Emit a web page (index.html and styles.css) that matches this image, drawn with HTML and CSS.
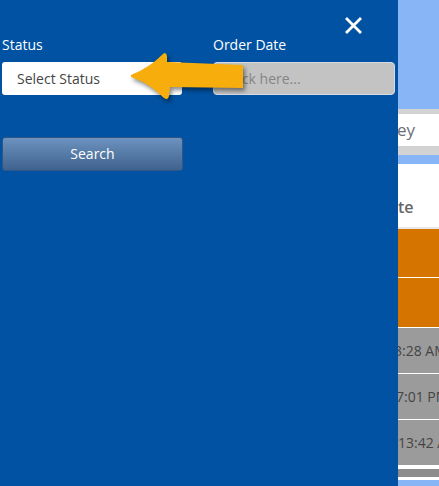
FILE: index.html
```html
<!DOCTYPE html>
<html>
<head>
<meta charset="utf-8">
<link rel="stylesheet" href="styles.css">
</head>
<body>
<div class="page">
  <aside class="panel">
    <div class="panel-head">
      <button class="close" aria-label="Close">
        <svg width="17" height="17" viewBox="0 0 17 17"><path d="M2 2L15 15M15 2L2 15" stroke="#fff" stroke-width="2.8" stroke-linecap="square"/></svg>
      </button>
    </div>
    <div class="filters">
      <div class="field">
        <label class="label">Status</label>
        <div class="select">Select Status</div>
      </div>
      <div class="field field-date">
        <label class="label">Order Date</label>
        <div class="input">Click here...</div>
      </div>
    </div>
    <button class="search">Search</button>
    <svg class="pointer" width="130" height="64" viewBox="0 0 130 64">
      <path d="M6 27 Q24 20 38 6 Q41 3 42 8 L42 14 L118 17 L118 40 L45 39 L44 48 Q43 53 39 50 Q24 35 6 29 Z" fill="#F7AD0B"/>
    </svg>
  </aside>
  <div class="behind">
    <div class="b-top"></div>
    <div class="b-gray"></div>
    <div class="b-search">ey</div>
    <div class="b-gray b-gray2"></div>
    <div class="b-blue"></div>
    <div class="b-head">te</div>
    <div class="b-line"></div>
    <div class="b-row b-orange"></div>
    <div class="b-sep"></div>
    <div class="b-row b-orange"></div>
    <div class="b-sep"></div>
    <div class="b-row b-grey"><span class="cut3">3:28 AM</span></div>
    <div class="b-sep"></div>
    <div class="b-row b-grey"><span class="cut1">7:01 PM</span></div>
    <div class="b-sep"></div>
    <div class="b-row b-grey"><span>13:42 AM</span></div>
    <div class="b-white4"></div>
    <div class="b-foot"></div>
    <div class="b-white3"></div>
    <div class="b-bottom"></div>
  </div>
</div>
</body>
</html>
```

FILE: styles.css
```css
* { box-sizing: border-box; }
html, body { margin: 0; padding: 0; }
body {
  width: 439px;
  height: 486px;
  overflow: hidden;
  font-family: "Open Sans", "Liberation Sans", sans-serif;
  font-size: 14px;
}
.page {
  display: flex;
  width: 439px;
  height: 486px;
}
.panel {
  position: relative;
  width: 398px;
  flex: 0 0 398px;
  height: 486px;
  background: #0152A2;
  padding: 0 3px 0 2px;
}
.panel-head {
  height: 35px;
  display: flex;
  justify-content: flex-end;
  align-items: flex-start;
  padding-top: 17px;
  padding-right: 33px;
}
.close {
  border: 0;
  background: none;
  padding: 0;
  width: 17px;
  height: 17px;
  display: block;
}
.close svg { display: block; }
.filters {
  display: grid;
  grid-template-columns: 180px 182px;
  column-gap: 31px;
}
.label {
  display: block;
  color: #fff;
  line-height: 20px;
  height: 20px;
  margin-bottom: 7px;
}
.select {
  height: 33px;
  background: #fff;
  border-radius: 3px;
  color: #444;
  line-height: 33px;
  padding-left: 15px;
}
.input {
  height: 33px;
  background: #C3C3C3;
  border: 1px solid #D6DCE4;
  border-radius: 4px;
  color: #858585;
  line-height: 31px;
  padding-left: 12px;
}
.search {
  display: block;
  margin-top: 42px;
  width: 181px;
  height: 34px;
  border: 1px solid #2F5684;
  border-radius: 3px;
  background: linear-gradient(#6E92BF, #3F628E);
  color: #fff;
  font-family: "Open Sans", "Liberation Sans", sans-serif;
  font-size: 14px;
  padding: 0 0 1px;
}
.pointer {
  position: absolute;
  left: 125px;
  top: 48px;
  filter: drop-shadow(2px 3px 2px rgba(0,0,0,0.45));
}
.behind {
  flex: 1;
  height: 486px;
  overflow: hidden;
  display: flex;
  flex-direction: column;
  white-space: nowrap;
}
.b-top { height: 109px; background: #87B5F5; flex: none; }
.b-gray { height: 5px; background: #D3D3D3; flex: none; }
.b-gray2 { height: 9px; }
.b-search {
  height: 32px; flex: none;
  background: #fff;
  color: #6B6F78;
  font-size: 17px;
  line-height: 32px;
  padding-left: 0;
  text-indent: -1px;
}
.b-blue { height: 9px; background: #87B5F5; flex: none; }
.b-head {
  height: 63px; flex: none;
  background: #fff;
  color: #666;
  font-weight: 600;
  font-size: 16px;
  line-height: 20px;
  padding-top: 33px;
}
.b-line { height: 2px; background: #E8E8E8; flex: none; }
.b-row {
  height: 48px; flex: none;
  line-height: 48px;
  color: #454545;
}
.b-row span { display: inline-block; }
.b-orange { background: #D57500; }
.b-grey { height: 45px; line-height: 45px; background: #9B9B9B; }
.b-orange + .b-sep + .b-orange { height: 49px; }
.b-sep { height: 1px; background: #fff; flex: none; }
.cut3 { margin-left: -4px; }
.cut1 { margin-left: -2px; }
.b-white4 { height: 4px; background: #fff; flex: none; }
.b-foot { height: 8px; background: #8C8C8C; flex: none; }
.b-white3 { height: 3px; background: #fff; flex: none; }
.b-bottom { flex: 1; background: #87B5F5; }
```
